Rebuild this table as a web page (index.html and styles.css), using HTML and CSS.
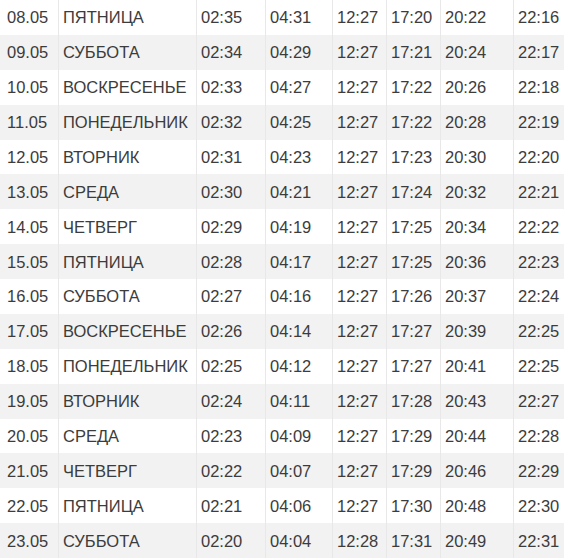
FILE: index.html
```html
<!DOCTYPE html>
<html lang="ru">
<head>
<meta charset="utf-8">
<link rel="stylesheet" href="styles.css">
</head>
<body>
<div class="table">
  <div class="row"><div class="c">08.05</div><div class="c">ПЯТНИЦА</div><div class="c">02:35</div><div class="c">04:31</div><div class="c">12:27</div><div class="c">17:20</div><div class="c">20:22</div><div class="c">22:16</div></div>
  <div class="row"><div class="c">09.05</div><div class="c">СУББОТА</div><div class="c">02:34</div><div class="c">04:29</div><div class="c">12:27</div><div class="c">17:21</div><div class="c">20:24</div><div class="c">22:17</div></div>
  <div class="row"><div class="c">10.05</div><div class="c">ВОСКРЕСЕНЬЕ</div><div class="c">02:33</div><div class="c">04:27</div><div class="c">12:27</div><div class="c">17:22</div><div class="c">20:26</div><div class="c">22:18</div></div>
  <div class="row"><div class="c">11.05</div><div class="c">ПОНЕДЕЛЬНИК</div><div class="c">02:32</div><div class="c">04:25</div><div class="c">12:27</div><div class="c">17:22</div><div class="c">20:28</div><div class="c">22:19</div></div>
  <div class="row"><div class="c">12.05</div><div class="c">ВТОРНИК</div><div class="c">02:31</div><div class="c">04:23</div><div class="c">12:27</div><div class="c">17:23</div><div class="c">20:30</div><div class="c">22:20</div></div>
  <div class="row"><div class="c">13.05</div><div class="c">СРЕДА</div><div class="c">02:30</div><div class="c">04:21</div><div class="c">12:27</div><div class="c">17:24</div><div class="c">20:32</div><div class="c">22:21</div></div>
  <div class="row"><div class="c">14.05</div><div class="c">ЧЕТВЕРГ</div><div class="c">02:29</div><div class="c">04:19</div><div class="c">12:27</div><div class="c">17:25</div><div class="c">20:34</div><div class="c">22:22</div></div>
  <div class="row"><div class="c">15.05</div><div class="c">ПЯТНИЦА</div><div class="c">02:28</div><div class="c">04:17</div><div class="c">12:27</div><div class="c">17:25</div><div class="c">20:36</div><div class="c">22:23</div></div>
  <div class="row"><div class="c">16.05</div><div class="c">СУББОТА</div><div class="c">02:27</div><div class="c">04:16</div><div class="c">12:27</div><div class="c">17:26</div><div class="c">20:37</div><div class="c">22:24</div></div>
  <div class="row"><div class="c">17.05</div><div class="c">ВОСКРЕСЕНЬЕ</div><div class="c">02:26</div><div class="c">04:14</div><div class="c">12:27</div><div class="c">17:27</div><div class="c">20:39</div><div class="c">22:25</div></div>
  <div class="row"><div class="c">18.05</div><div class="c">ПОНЕДЕЛЬНИК</div><div class="c">02:25</div><div class="c">04:12</div><div class="c">12:27</div><div class="c">17:27</div><div class="c">20:41</div><div class="c">22:25</div></div>
  <div class="row"><div class="c">19.05</div><div class="c">ВТОРНИК</div><div class="c">02:24</div><div class="c">04:11</div><div class="c">12:27</div><div class="c">17:28</div><div class="c">20:43</div><div class="c">22:27</div></div>
  <div class="row"><div class="c">20.05</div><div class="c">СРЕДА</div><div class="c">02:23</div><div class="c">04:09</div><div class="c">12:27</div><div class="c">17:29</div><div class="c">20:44</div><div class="c">22:28</div></div>
  <div class="row"><div class="c">21.05</div><div class="c">ЧЕТВЕРГ</div><div class="c">02:22</div><div class="c">04:07</div><div class="c">12:27</div><div class="c">17:29</div><div class="c">20:46</div><div class="c">22:29</div></div>
  <div class="row"><div class="c">22.05</div><div class="c">ПЯТНИЦА</div><div class="c">02:21</div><div class="c">04:06</div><div class="c">12:27</div><div class="c">17:30</div><div class="c">20:48</div><div class="c">22:30</div></div>
  <div class="row"><div class="c">23.05</div><div class="c">СУББОТА</div><div class="c">02:20</div><div class="c">04:04</div><div class="c">12:28</div><div class="c">17:31</div><div class="c">20:49</div><div class="c">22:31</div></div>
</div>
</body>
</html>
```
FILE: styles.css
```css
html, body {
  margin: 0;
  padding: 0;
  background: #ffffff;
}
body {
  font-family: "Liberation Sans", Arial, sans-serif;
  font-size: 16.5px;
  color: #3c3c3c;
  overflow: hidden;
}
.table {
  display: flex;
  flex-direction: column;
  width: 564px;
}
.row {
  display: grid;
  grid-template-columns: 58px 138px 69px 67px 54px 54px 73px 1fr;
  height: 34.875px;
  background: #ffffff;
}
.row:nth-child(even) {
  background: #f2f2f2;
}
.c {
  display: flex;
  align-items: center;
  padding-left: 4px;
  padding-top: 1px;
  border-left: 1px solid #e8e8e8;
  white-space: nowrap;
  overflow: hidden;
}
.c:first-child {
  border-left: none;
  padding-left: 7px;
}
```
